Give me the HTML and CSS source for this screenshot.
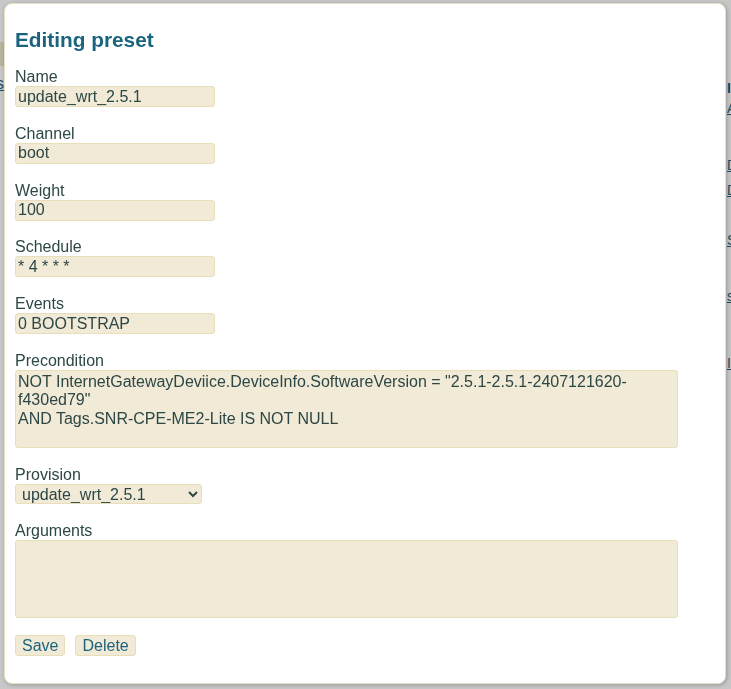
FILE: index.html
```html
<!DOCTYPE html>
<html lang="en">
<head>
    <meta charset="UTF-8">
    <meta name="viewport" content="width=device-width, initial-scale=1.0">
    <title>Presets</title>
    <link rel="stylesheet" href="styles.css">
</head>
<body>
    <div class="page">
        <div class="side side-left">
            <div class="band"></div>
            <a class="item" href="#">Presets</a>
        </div>
        <div class="side side-right">
            <span class="item head-text">Info</span>
            <a class="item i-add" href="#">Add</a>
            <a class="item i-d1" href="#">Delete</a>
            <a class="item i-d2" href="#">Delete</a>
            <a class="item i-s1" href="#">Show</a>
            <a class="item i-s2" href="#">show</a>
            <a class="item i-imp" href="#">Import</a>
        </div>
    </div>

    <div class="overlay">
        <div class="modal">
            <h1 class="modal-title">Editing preset</h1>

            <div class="field">
                <label for="name">Name</label>
                <input id="name" class="input" type="text" value="update_wrt_2.5.1">
            </div>
            <div class="field">
                <label for="channel">Channel</label>
                <input id="channel" class="input" type="text" value="boot">
            </div>
            <div class="field">
                <label for="weight">Weight</label>
                <input id="weight" class="input" type="text" value="100">
            </div>
            <div class="field">
                <label for="schedule">Schedule</label>
                <input id="schedule" class="input" type="text" value="* 4 * * *">
            </div>
            <div class="field">
                <label for="events">Events</label>
                <input id="events" class="input" type="text" value="0 BOOTSTRAP">
            </div>
            <div class="field">
                <label for="precondition">Precondition</label>
                <textarea id="precondition" class="area">NOT InternetGatewayDeviice.DeviceInfo.SoftwareVersion = "2.5.1-2.5.1-2407121620-f430ed79"
AND Tags.SNR-CPE-ME2-Lite IS NOT NULL</textarea>
            </div>
            <div class="field">
                <label for="provision">Provision</label>
                <select id="provision" class="select">
                    <option>update_wrt_2.5.1</option>
                </select>
            </div>
            <div class="field">
                <label for="args">Arguments</label>
                <textarea id="args" class="area"></textarea>
            </div>

            <div class="actions">
                <button class="btn">Save</button>
                <button class="btn">Delete</button>
            </div>
        </div>
    </div>
</body>
</html>
```

FILE: styles.css
```css
body {
    margin: 0;
    background: #fff;
    font-family: "Liberation Sans", Arial, sans-serif;
    font-size: 16px;
    color: #2d4747;
    overflow: hidden;
}

/* page behind the dialog, only its edges show */
.page {
    display: flex;
    justify-content: space-between;
    height: 100vh;
}

.side {
    width: 60px;
    font-size: 14px;
    line-height: 16px;
}

.side-left {
    margin-left: -56px;
    text-align: right;
}

.side-right {
    margin-right: -56px;
}

.band {
    height: 24px;
    margin-top: 42px;
    background: #ece4cb;
}

.item {
    display: block;
    color: #1b6480;
}

.side-left .item {
    margin-top: 9px;
    font-size: 16px;
    line-height: 18px;
}

.head-text {
    margin-top: 80px;
    font-weight: bold;
}

.i-add { margin-top: 4px; }
.i-d1 { margin-top: 41px; }
.i-d2 { margin-top: 9px; }
.i-s1 { margin-top: 34px; }
.i-s2 { margin-top: 40px; }
.i-imp { margin-top: 51px; }

/* dialog */
.overlay {
    position: fixed;
    inset: 0;
    background: rgba(0, 0, 0, 0.22);
    display: flex;
    align-items: flex-start;
    padding: 3px 0 0 4px;
}

.modal {
    box-sizing: border-box;
    width: 722px;
    height: 681px;
    padding: 10px;
    background: #fff;
    border: 1px solid #e9e1c4;
    border-radius: 8px;
    box-shadow: 1px 1px 4px rgba(0, 0, 0, 0.25);
}

.modal-title {
    margin: 14px 0 16px 0;
    font-size: 20.8px;
    line-height: 24px;
    color: #1b6480;
}

.field {
    margin-bottom: 17.8px;
}

.field label {
    display: block;
    line-height: 18px;
}

.input,
.area,
.select,
.btn {
    box-sizing: border-box;
    font-family: inherit;
    font-size: 16px;
    color: #2d4747;
    background: #f1ead6;
    border: 1px solid #e8deba;
    border-radius: 3px;
}

.input,
.area,
.select {
    display: block;
}

.input {
    width: 200px;
    height: 21px;
    padding: 0 2px;
}

.area {
    width: 663px;
    height: 78px;
    padding: 2px;
    line-height: 18.4px;
    resize: none;
}

.select {
    width: 187px;
    height: 20px;
    padding: 0 0 0 2px;
}

.actions {
    display: flex;
    gap: 10px;
    margin-top: 17px;
}

.btn {
    height: 21px;
    padding: 0 6px;
    color: #1b6480;
    line-height: 19px;
}
```
